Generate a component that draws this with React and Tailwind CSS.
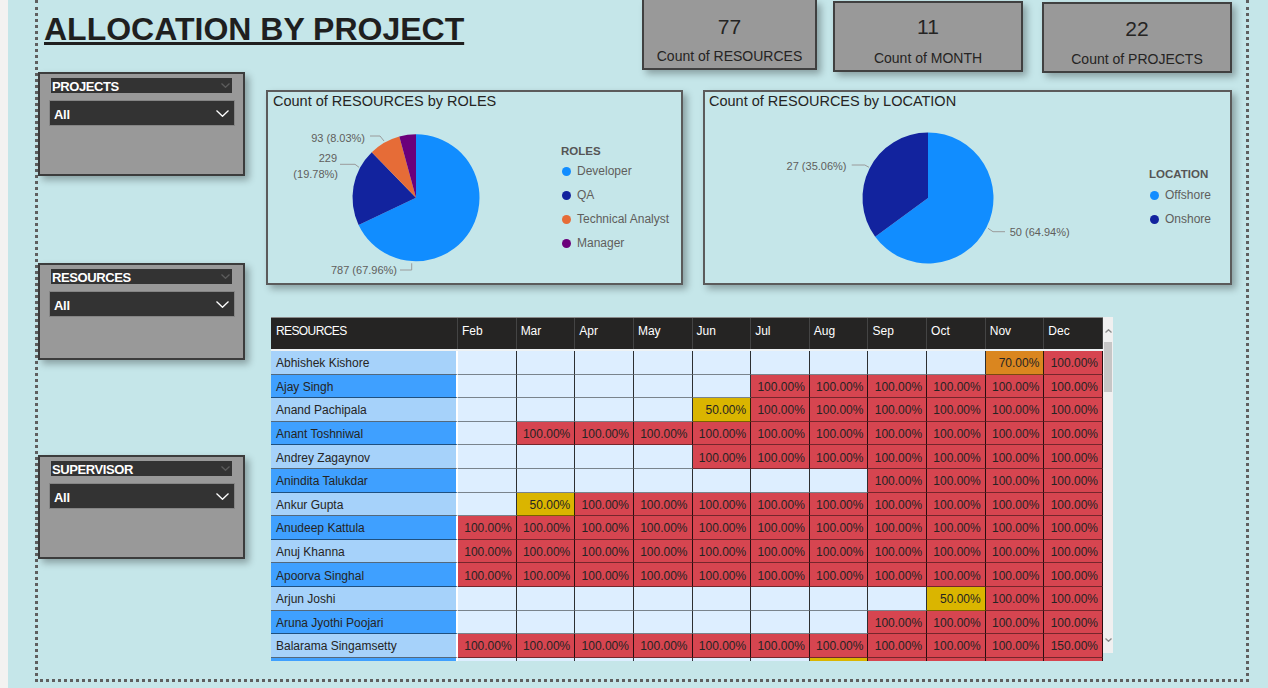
import React from "react";

const MONTHS = ["Feb", "Mar", "Apr", "May", "Jun", "Jul", "Aug", "Sep", "Oct", "Nov", "Dec"];
const FULL = [100, 100, 100, 100, 100, 100, 100, 100, 100, 100, 100];

const ROWS = [
  { name: "Abhishek Kishore", v: [0, 0, 0, 0, 0, 0, 0, 0, 0, 70, 100] },
  { name: "Ajay Singh", v: [0, 0, 0, 0, 0, 100, 100, 100, 100, 100, 100] },
  { name: "Anand Pachipala", v: [0, 0, 0, 0, 50, 100, 100, 100, 100, 100, 100] },
  { name: "Anant Toshniwal", v: [0, 100, 100, 100, 100, 100, 100, 100, 100, 100, 100] },
  { name: "Andrey Zagaynov", v: [0, 0, 0, 0, 100, 100, 100, 100, 100, 100, 100] },
  { name: "Anindita Talukdar", v: [0, 0, 0, 0, 0, 0, 0, 100, 100, 100, 100] },
  { name: "Ankur Gupta", v: [0, 50, 100, 100, 100, 100, 100, 100, 100, 100, 100] },
  { name: "Anudeep Kattula", v: FULL },
  { name: "Anuj Khanna", v: FULL },
  { name: "Apoorva Singhal", v: FULL },
  { name: "Arjun Joshi", v: [0, 0, 0, 0, 0, 0, 0, 0, 50, 100, 100] },
  { name: "Aruna Jyothi Poojari", v: [0, 0, 0, 0, 0, 0, 0, 100, 100, 100, 100] },
  { name: "Balarama Singamsetty", v: [100, 100, 100, 100, 100, 100, 100, 100, 100, 100, 150] },
  // next row is scrolled off, only its top edge shows
  { name: "", v: [0, 0, 0, 0, 0, 0, 50, 100, 100, 100, 100], hidden: true },
];

// cell background by allocation value
const cellBg = (v) => {
  if (!v) return "bg-[#ddeeff]";
  if (v === 50) return "bg-[#dab500]";
  if (v === 70) return "bg-[#da861f]";
  return "bg-[#d64550]";
};

function Chevron({ w = 13, h = 7, color = "#ffffff", up = false }) {
  const pts = up
    ? `0.5,${h - 0.5} ${w / 2},0.7 ${w - 0.5},${h - 0.5}`
    : `0.5,0.5 ${w / 2},${h - 0.7} ${w - 0.5},0.5`;
  return (
    <svg width={w} height={h} viewBox={`0 0 ${w} ${h}`}>
      <polyline points={pts} fill="none" stroke={color} strokeWidth="1.3" />
    </svg>
  );
}

function Slicer({ label, h, mt }) {
  return (
    <div className={`${h} ${mt} border-2 border-[#3c3c3c] bg-[#999999] shadow-[4px_4px_7px_rgba(0,0,0,0.3)]`}>
      <div className="mt-[4px] ml-[11px] w-[181px] h-[15px] bg-[#333333] flex items-center justify-between pl-[1px] pr-[2px]">
        <span className="text-white font-bold text-[13px] leading-none tracking-[-0.4px] pt-[2px]">{label}</span>
        <Chevron w={9} h={5} color="#5c5c5c" />
      </div>
      <div className="mt-[7px] ml-[9px] w-[186px] h-[26px] bg-[#333333] border border-[#858585] flex items-center justify-between pl-[4px] pr-[5px]">
        <span className="text-white font-bold text-[13px] tracking-[-0.3px] pt-[4px]">All</span>
        <Chevron />
      </div>
    </div>
  );
}

function KpiCard({ value, label, box, labelMt }) {
  return (
    <div className={`${box} bg-[#999999] border-[#404040] shadow-[4px_4px_7px_rgba(0,0,0,0.3)] flex flex-col items-center text-[#252423]`}>
      <div className="text-[21px] leading-[24px]">{value}</div>
      <div className={`${labelMt} text-[14px] leading-[18px]`}>{label}</div>
    </div>
  );
}

function LegendItem({ color, text }) {
  return (
    <div className="h-[24px] flex items-center">
      <span className={`ml-[1px] w-[9px] h-[9px] rounded-full ${color}`} />
      <span className="ml-[6px] text-[12px] text-[#605e5c]">{text}</span>
    </div>
  );
}

const LBL = { fontFamily: "Liberation Sans, Arial, sans-serif", fontSize: 11, fill: "#605e5c" };

function RolesCard() {
  return (
    <div className="w-[417px] h-[195px] border-2 border-[#5b5b5b] bg-[#c5e6e9] shadow-[4px_4px_7px_rgba(0,0,0,0.3)]">
      <div className="pl-[5px] h-[18px] leading-[18px] text-[14.5px] text-[#252423]">Count of RESOURCES by ROLES</div>
      <div className="flex">
        <svg width="280" height="173" viewBox="0 0 280 173">
          <path d="M148,87.7 L148,24.2 A63.5,63.5 0 1 1 90.61,114.88 Z" fill="#118dff" />
          <path d="M148,87.7 L90.61,114.88 A63.5,63.5 0 0 1 103.78,42.13 Z" fill="#12239e" />
          <path d="M148,87.7 L103.78,42.13 A63.5,63.5 0 0 1 131.32,26.43 Z" fill="#e66c37" />
          <path d="M148,87.7 L131.32,26.43 A63.5,63.5 0 0 1 148,24.2 Z" fill="#6b007b" />
          <polyline points="102,26 112,26 116,31" fill="none" stroke="#9a9a9a" strokeWidth="1" />
          <polyline points="72,54.3 87,54.3 91,57.3" fill="none" stroke="#9a9a9a" strokeWidth="1" />
          <polyline points="132,160 143.7,160 143.7,153.3" fill="none" stroke="#9a9a9a" strokeWidth="1" />
          <text x="97" y="31.7" textAnchor="end" style={LBL}>93 (8.03%)</text>
          <text x="69" y="51.7" textAnchor="end" style={LBL}>229</text>
          <text x="70" y="68" textAnchor="end" style={LBL}>(19.78%)</text>
          <text x="129" y="164" textAnchor="end" style={LBL}>787 (67.96%)</text>
        </svg>
        <div className="ml-[13px] mt-[33px]">
          <div className="h-[16px] leading-[16px] text-[11.5px] font-bold text-[#555555]">ROLES</div>
          <LegendItem color="bg-[#118dff]" text="Developer" />
          <LegendItem color="bg-[#12239e]" text="QA" />
          <LegendItem color="bg-[#e66c37]" text="Technical Analyst" />
          <LegendItem color="bg-[#6b007b]" text="Manager" />
        </div>
      </div>
    </div>
  );
}

function LocationCard() {
  return (
    <div className="w-[529px] h-[195px] border-2 border-[#5b5b5b] bg-[#c5e6e9] shadow-[4px_4px_7px_rgba(0,0,0,0.3)]">
      <div className="pl-[4px] h-[18px] leading-[18px] text-[14.5px] text-[#252423]">Count of RESOURCES by LOCATION</div>
      <div className="flex">
        <svg width="420" height="173" viewBox="0 0 420 173">
          <path d="M223,88 L223,22.5 A65.5,65.5 0 1 1 170.16,126.71 Z" fill="#118dff" />
          <path d="M223,88 L170.16,126.71 A65.5,65.5 0 0 1 223,22.5 Z" fill="#12239e" />
          <polyline points="146.7,55 159.8,55 164,57.3" fill="none" stroke="#9a9a9a" strokeWidth="1" />
          <polyline points="283,118.3 288,121.7 300,121.7" fill="none" stroke="#9a9a9a" strokeWidth="1" />
          <text x="141.5" y="59.7" textAnchor="end" style={LBL}>27 (35.06%)</text>
          <text x="304.7" y="126" style={LBL}>50 (64.94%)</text>
        </svg>
        <div className="ml-[24px] mt-[56px]">
          <div className="mb-[1px] h-[16px] leading-[16px] text-[11.5px] font-bold text-[#555555]">LOCATION</div>
          <LegendItem color="bg-[#118dff]" text="Offshore" />
          <LegendItem color="bg-[#12239e]" text="Onshore" />
        </div>
      </div>
    </div>
  );
}

function AllocationTable() {
  return (
    <div className="mt-[32px] ml-[5px] flex items-start">
      <div className="w-[832px] h-[344px] overflow-hidden text-[12px]">
        <div className="grid grid-cols-[187px_repeat(11,1fr)] h-[34px] bg-[#252423] border-t border-t-[#8a8a8a] border-b-2 border-b-[#eef2f4] text-white">
          <div className="pl-[5px] pt-[5px] leading-[16px] border-r border-r-[#444444] tracking-[-0.6px]">RESOURCES</div>
          {MONTHS.map((m) => (
            <div key={m} className="pl-[4px] pt-[5px] leading-[16px] border-r border-r-[#444444]">{m}</div>
          ))}
        </div>
        {ROWS.map((r, i) => (
          <div key={i} className="grid grid-cols-[187px_repeat(11,1fr)] h-[23.6px] text-[#252423]">
            <div className={`${i % 2 === 0 ? "bg-[#a6d2fa]" : "bg-[#3fa0ff]"} border-r-2 border-r-white border-b border-b-[rgba(0,0,0,0.5)] pl-[5px] pt-[2px] flex items-center whitespace-nowrap`}>
              {r.name}
            </div>
            {r.v.map((v, j) => (
              <div key={j} className={`${cellBg(v)} border-r border-r-[rgba(0,0,0,0.8)] border-b border-b-[rgba(0,0,0,0.45)] pr-[4px] pt-[2px] flex items-center justify-end`}>
                {v && !r.hidden ? `${v.toFixed(2)}%` : ""}
              </div>
            ))}
          </div>
        ))}
      </div>
      <div className="w-[10px] h-[336px] bg-[#f0f0f0] flex flex-col items-center">
        <div className="mt-[12px]"><Chevron w={7} h={4} color="#8a8a8a" up /></div>
        <div className="mt-[9px] w-[8px] h-[50px] bg-[#c6c6c6]" />
        <div className="flex-1" />
        <div className="mb-[11px]"><Chevron w={7} h={4} color="#8a8a8a" /></div>
      </div>
    </div>
  );
}

export default function App() {
  return (
    <div className="flex w-[1268px] h-[688px] overflow-hidden bg-[#c5e6e9] font-['Liberation_Sans',Arial,sans-serif]">
      <div className="w-[8px] h-full bg-[#f3f2f1]" />
      <div className="ml-[27px] w-[1214px] h-[682px] border-l-[3px] border-r-[3px] border-b-[3px] border-dotted border-[#5f5f5f] flex flex-col">
        {/* title + KPI cards */}
        <div className="flex h-[72px]">
          <h1 className="ml-[6px] mt-[13px] self-start text-[32px] leading-none font-bold text-[#1f1f1f] underline decoration-[3px] underline-offset-[2px]">
            ALLOCATION BY PROJECT
          </h1>
          <div className="ml-auto mr-[14px] flex items-start">
            <KpiCard value="77" label="Count of RESOURCES" box="w-[175px] h-[70px] border-2 border-t-0 pt-[15px]" labelMt="mt-[8px]" />
            <KpiCard value="11" label="Count of MONTH" box="ml-[16px] mt-[1px] w-[190px] h-[71px] border-2 pt-[12px]" labelMt="mt-[10px]" />
            <KpiCard value="22" label="Count of PROJECTS" box="ml-[19px] mt-[2px] w-[190px] h-[71px] border-2 pt-[13px]" labelMt="mt-[9px]" />
          </div>
        </div>

        <div className="flex">
          <div className="w-[207px] flex flex-col">
            <Slicer label="PROJECTS" h="h-[104px]" mt="mt-0" />
            <Slicer label="RESOURCES" h="h-[97px]" mt="mt-[87px]" />
            <Slicer label="SUPERVISOR" h="h-[104px]" mt="mt-[95px]" />
          </div>
          <div className="ml-[21px] flex flex-col">
            <div className="mt-[18px] flex gap-[20px]">
              <RolesCard />
              <LocationCard />
            </div>
            <AllocationTable />
          </div>
        </div>
      </div>
    </div>
  );
}
